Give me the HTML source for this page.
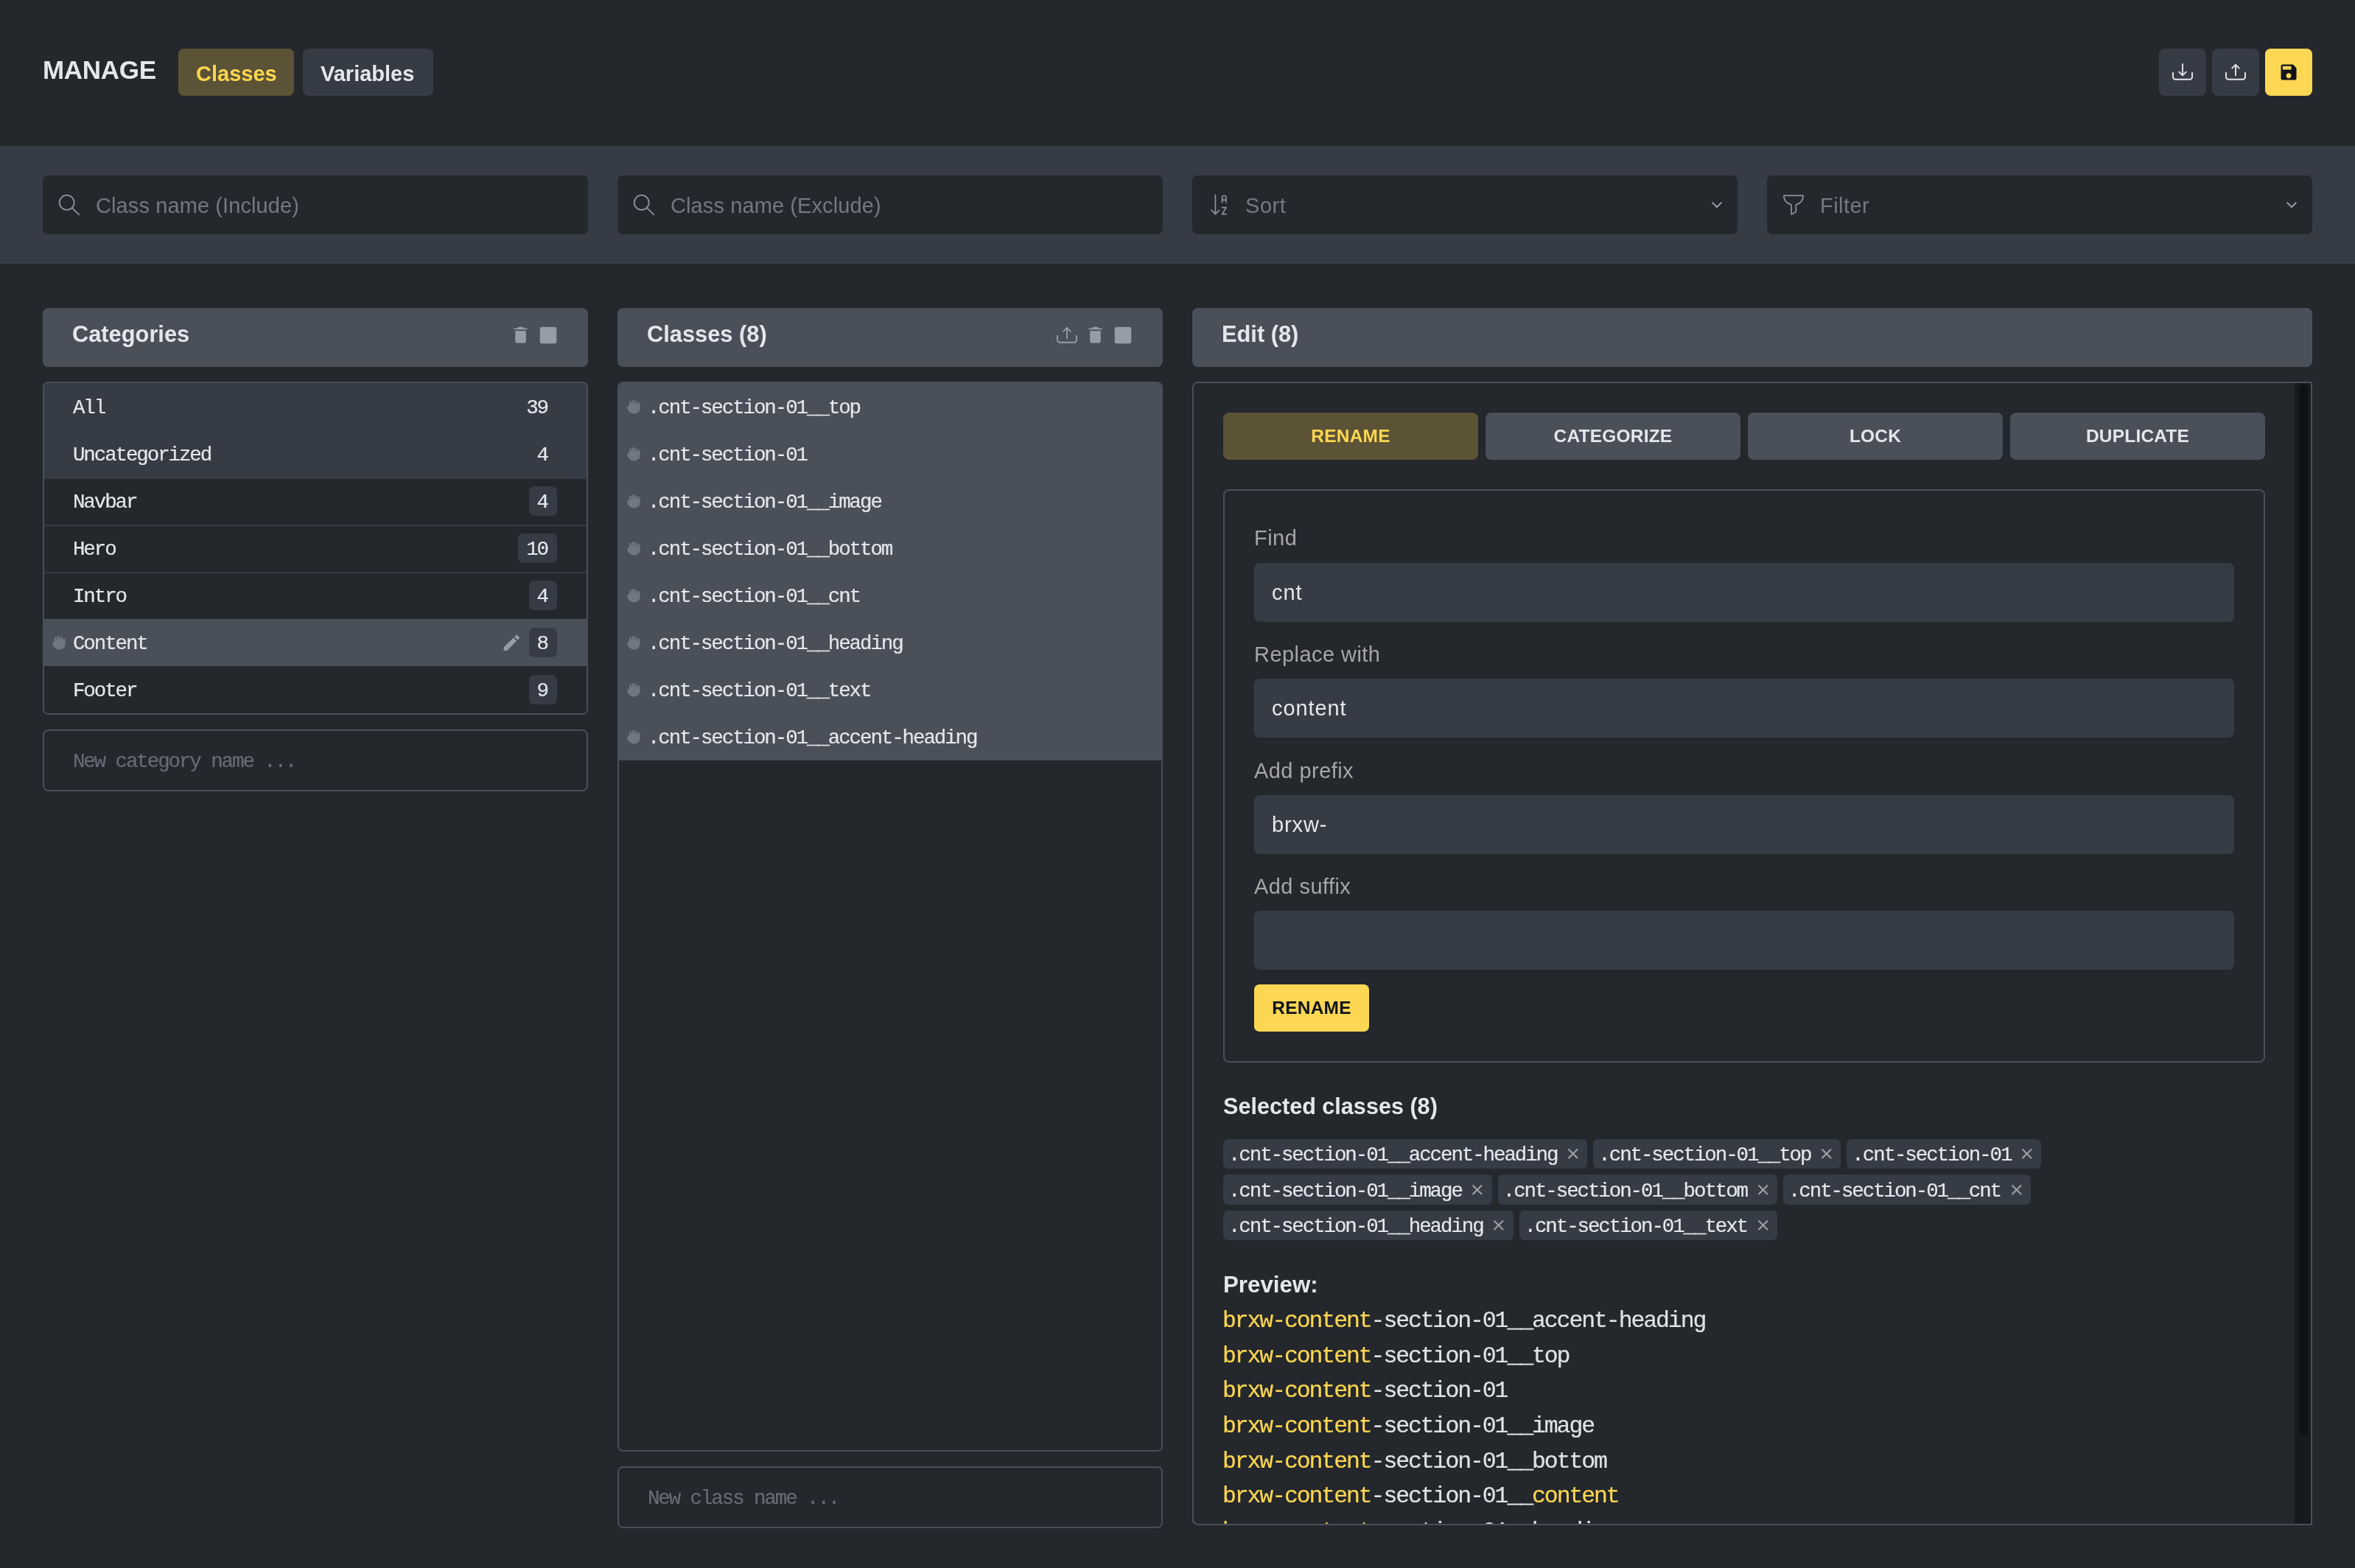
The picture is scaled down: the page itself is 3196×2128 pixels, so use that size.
<!DOCTYPE html>
<html lang="en"><head><meta charset="utf-8"><title>Manage Classes</title>
<style>
*{box-sizing:border-box;margin:0;padding:0}
html,body{width:3196px;height:2128px;overflow:hidden;background:#24272c}
body{position:relative;font-family:"Liberation Sans",sans-serif;color:#e4e7eb;-webkit-font-smoothing:antialiased;will-change:transform}
.abs{position:absolute}
.box{position:absolute;border-radius:7.5px}
.t{position:absolute;white-space:nowrap;line-height:1}
.mono{font-family:"Liberation Mono",monospace;font-size:26px;letter-spacing:-1.2px}
.b{font-weight:700}
.row{position:absolute;left:0;width:736px;height:64px}
.sep{box-shadow:inset 0 2px 0 0 #363c45}
.badge{position:absolute;top:12px;height:40px;border-radius:7px;background:#363c45}

.chip{position:absolute;height:40px;border-radius:6.5px;background:#363c45}
svg{display:block;overflow:visible}
</style></head><body>
<div class="t b" style="left:58px;top:77.07px;font-size:35px;letter-spacing:-.3px">MANAGE</div>
<div class="box" style="left:242px;top:66px;width:157px;height:64px;background:#5c5336"></div>
<div class="t b" style="left:266px;top:85.65px;font-size:29px;color:#fbd651">Classes</div>
<div class="box" style="left:411px;top:66px;width:177px;height:64px;background:#363c45"></div>
<div class="t b" style="left:435px;top:85.65px;font-size:29px;">Variables</div>
<div class="box" style="left:2930px;top:66px;width:64px;height:64px;background:#363c45"></div>
<div class="box" style="left:3002px;top:66px;width:64px;height:64px;background:#363c45"></div>
<div class="box" style="left:3074px;top:66px;width:64px;height:64px;background:#fbd754"></div>
<svg class="abs" style="left:2948px;top:85.8px" width="28" height="24" viewBox="0 0 28 24" fill="none" stroke="#e4e7eb" stroke-width="1.9" stroke-linecap="round" stroke-linejoin="round"><path d="M1 12.8v5.6a3.4 3.4 0 0 0 3.4 3.4h19.200a3.4 3.4 0 0 0 3.4-3.4v-5.6"/><path d="M14 1V15.8M9.200 11.6L14 16.4l4.8-4.8"/></svg>
<svg class="abs" style="left:3020px;top:85.8px" width="28" height="24" viewBox="0 0 28 24" fill="none" stroke="#e4e7eb" stroke-width="1.9" stroke-linecap="round" stroke-linejoin="round"><path d="M1 12.8v5.6a3.4 3.4 0 0 0 3.4 3.4h19.200a3.4 3.4 0 0 0 3.4-3.4v-5.6"/><path d="M14 1.8V16.2M9.200 6.6L14 1.8l4.8 4.8"/></svg>
<svg class="abs" style="left:3092.00px;top:84.00px" width="28" height="28" viewBox="0 0 512 512"><path fill="#111418"  d="M362.7 64h-256C83 64 64 83.2 64 106.700v298.700c0 23.500 19 42.700 42.700 42.700h298.700c23.500 0 42.700-19.200 42.700-42.700v-256L362.700 64zM256 405.300c-35.400 0-64-28.600-64-64s28.600-64 64-64 64 28.600 64 64-28.600 64-64 64zM320 192H106.700v-85.300H320V192z"/></svg>
<div class="abs" style="left:0;top:198px;width:3196px;height:160px;background:#363c45"></div>
<div class="box" style="left:58px;top:238px;width:740px;height:80px;background:#24272c"></div>
<div class="box" style="left:838px;top:238px;width:740px;height:80px;background:#24272c"></div>
<div class="box" style="left:1618px;top:238px;width:740px;height:80px;background:#24272c"></div>
<div class="box" style="left:2398px;top:238px;width:740px;height:80px;background:#24272c"></div>
<svg class="abs" style="left:79px;top:263px" width="30" height="30" viewBox="0 0 30 30" fill="none" stroke="#8e939b" stroke-width="1.8" stroke-linecap="round"><circle cx="11.700" cy="11.900" r="10"/><path d="M18.900 19.100L28.200 28.300"/></svg>
<svg class="abs" style="left:859px;top:263px" width="30" height="30" viewBox="0 0 30 30" fill="none" stroke="#8e939b" stroke-width="1.8" stroke-linecap="round"><circle cx="11.700" cy="11.900" r="10"/><path d="M18.900 19.100L28.200 28.300"/></svg>
<div class="t " style="left:130px;top:264.55px;font-size:29px;letter-spacing:.1px;color:#747980">Class name (Include)</div>
<div class="t " style="left:910px;top:264.55px;font-size:29px;letter-spacing:.1px;color:#747980">Class name (Exclude)</div>
<svg class="abs" style="left:1640px;top:260px" width="30" height="36" viewBox="0 0 30 36" fill="none" stroke="#8e939b" stroke-width="1.7" stroke-linecap="round" stroke-linejoin="round"><path d="M9.400 4.600V30.600M4.200 25.400L9.400 30.700l5.200-5.300"/><path d="M18.600 14.600V8.200a2.700 2.700 0 0 1 5.400 0V14.600M18.600 11.400H24"/><path d="M18.600 21.700H24L18.600 30.600H24"/></svg>
<div class="t " style="left:1690px;top:264.55px;font-size:29px;letter-spacing:.55px;color:#747980">Sort</div>
<svg class="abs" style="left:2418px;top:262px" width="32" height="32" viewBox="0 0 32 32" fill="none" stroke="#8e939b" stroke-width="1.7" stroke-linecap="round" stroke-linejoin="round"><path d="M3.600 3.300H28.400a.8 .8 0 0 1 .8 .9C28.600 10.500 24.500 14.600 19.300 15.800V25.600L13.100 29.100V15.800C7.600 14.600 3.400 10.500 2.800 4.200a.8 .8 0 0 1 .8-.9z"/></svg>
<div class="t " style="left:2470px;top:264.55px;font-size:29px;letter-spacing:.45px;color:#747980">Filter</div>
<svg class="abs" style="left:2322px;top:270px" width="16" height="16" viewBox="0 0 16 16" fill="none" stroke="#9a9fa7" stroke-width="2" stroke-linecap="butt" stroke-linejoin="miter"><path d="M1.600 4.600L8 11l6.400-6.400"/></svg>
<svg class="abs" style="left:3102px;top:270px" width="16" height="16" viewBox="0 0 16 16" fill="none" stroke="#9a9fa7" stroke-width="2" stroke-linecap="butt" stroke-linejoin="miter"><path d="M1.600 4.600L8 11l6.400-6.400"/></svg>
<div class="box" style="left:58px;top:418px;width:740px;height:80px;background:#49505a"></div>
<div class="t b" style="left:98px;top:439.12px;font-size:30.8px;">Categories</div>
<div class="box" style="left:838px;top:418px;width:740px;height:80px;background:#49505a"></div>
<div class="t b" style="left:878px;top:439.12px;font-size:30.8px;">Classes (8)</div>
<div class="box" style="left:1618px;top:418px;width:1520px;height:80px;background:#49505a"></div>
<div class="t b" style="left:1658px;top:439.12px;font-size:30.8px;">Edit (8)</div>
<svg class="abs" style="left:729.10px;top:440.00px" width="30" height="30" viewBox="0 0 512 512"><path fill="#969da8"  d="M405.333 64H106.667C83.198 64 64 83.198 64 106.667v298.666C64 428.802 83.198 448 106.667 448h298.666C428.802 448 448 428.802 448 405.333V106.667C448 83.198 428.802 64 405.333 64z"/></svg>
<svg class="abs" style="left:691.60px;top:440.40px" width="29" height="29" viewBox="0 0 512 512"><path fill="#969da8"  d="M128 405.429C128 428.846 147.198 448 170.667 448h170.667C364.802 448 384 428.846 384 405.429V160H128v245.429zM416 96h-80l-26.785-32H202.786L176 96H96v32h320V96z"/></svg>
<svg class="abs" style="left:1509.10px;top:440.00px" width="30" height="30" viewBox="0 0 512 512"><path fill="#969da8"  d="M405.333 64H106.667C83.198 64 64 83.198 64 106.667v298.666C64 428.802 83.198 448 106.667 448h298.666C428.802 448 448 428.802 448 405.333V106.667C448 83.198 428.802 64 405.333 64z"/></svg>
<svg class="abs" style="left:1471.60px;top:440.40px" width="29" height="29" viewBox="0 0 512 512"><path fill="#969da8"  d="M128 405.429C128 428.846 147.198 448 170.667 448h170.667C364.802 448 384 428.846 384 405.429V160H128v245.429zM416 96h-80l-26.785-32H202.786L176 96H96v32h320V96z"/></svg>
<svg class="abs" style="left:1434px;top:442.6px" width="28" height="24" viewBox="0 0 28 24" fill="none" stroke="#969da8" stroke-width="1.9" stroke-linecap="round" stroke-linejoin="round"><path d="M1 12.8v5.6a3.4 3.4 0 0 0 3.4 3.4h19.200a3.4 3.4 0 0 0 3.4-3.4v-5.6"/><path d="M14 1.8V16.2M9.200 6.6L14 1.8l4.8 4.8"/></svg>
<div class="box" style="left:58px;top:518px;width:740px;height:452px;border:2px solid #49505b;overflow:hidden">
<div class="row" style="top:0px;background:#363c45">
<div class="t" style="left:38.95px;top:20.03px;font-family:'Liberation Mono',monospace;font-size:27.5px;letter-spacing:-2.1px;-webkit-text-stroke:.2px currentColor;">All</div>
<div class="t" style="left:654.15px;top:20.03px;font-family:'Liberation Mono',monospace;font-size:27.5px;letter-spacing:-2.1px;-webkit-text-stroke:.2px currentColor;">39</div>
</div>
<div class="row" style="top:64px;background:#363c45">
<div class="t" style="left:38.95px;top:20.03px;font-family:'Liberation Mono',monospace;font-size:27.5px;letter-spacing:-2.1px;-webkit-text-stroke:.2px currentColor;">Uncategorized</div>
<div class="t" style="left:668.55px;top:20.03px;font-family:'Liberation Mono',monospace;font-size:27.5px;letter-spacing:-2.1px;-webkit-text-stroke:.2px currentColor;">4</div>
</div>
<div class="row sep" style="top:128px;background:#24272c">
<div class="t" style="left:38.95px;top:20.03px;font-family:'Liberation Mono',monospace;font-size:27.5px;letter-spacing:-2.1px;-webkit-text-stroke:.2px currentColor;">Navbar</div>
<div class="badge" style="left:657.6px;width:38.4px"></div>
<div class="t" style="left:668.55px;top:20.03px;font-family:'Liberation Mono',monospace;font-size:27.5px;letter-spacing:-2.1px;-webkit-text-stroke:.2px currentColor;">4</div>
</div>
<div class="row sep" style="top:192px;background:#24272c">
<div class="t" style="left:38.95px;top:20.03px;font-family:'Liberation Mono',monospace;font-size:27.5px;letter-spacing:-2.1px;-webkit-text-stroke:.2px currentColor;">Hero</div>
<div class="badge" style="left:643.2px;width:52.8px"></div>
<div class="t" style="left:654.15px;top:20.03px;font-family:'Liberation Mono',monospace;font-size:27.5px;letter-spacing:-2.1px;-webkit-text-stroke:.2px currentColor;">10</div>
</div>
<div class="row sep" style="top:256px;background:#24272c">
<div class="t" style="left:38.95px;top:20.03px;font-family:'Liberation Mono',monospace;font-size:27.5px;letter-spacing:-2.1px;-webkit-text-stroke:.2px currentColor;">Intro</div>
<div class="badge" style="left:657.6px;width:38.4px"></div>
<div class="t" style="left:668.55px;top:20.03px;font-family:'Liberation Mono',monospace;font-size:27.5px;letter-spacing:-2.1px;-webkit-text-stroke:.2px currentColor;">4</div>
</div>
<div class="row" style="top:320px;background:#49505a">
<div class="t" style="left:38.95px;top:20.03px;font-family:'Liberation Mono',monospace;font-size:27.5px;letter-spacing:-2.1px;-webkit-text-stroke:.2px currentColor;">Content</div>
<div class="badge" style="left:657.6px;width:38.4px"></div>
<div class="t" style="left:668.55px;top:20.03px;font-family:'Liberation Mono',monospace;font-size:27.5px;letter-spacing:-2.1px;-webkit-text-stroke:.2px currentColor;">8</div>
</div>
<div class="row" style="top:384px;background:#24272c">
<div class="t" style="left:38.95px;top:20.03px;font-family:'Liberation Mono',monospace;font-size:27.5px;letter-spacing:-2.1px;-webkit-text-stroke:.2px currentColor;">Footer</div>
<div class="badge" style="left:657.6px;width:38.4px"></div>
<div class="t" style="left:668.55px;top:20.03px;font-family:'Liberation Mono',monospace;font-size:27.5px;letter-spacing:-2.1px;-webkit-text-stroke:.2px currentColor;">9</div>
</div>
</div>
<svg class="abs" style="left:70.80px;top:863.00px" width="18" height="19" viewBox="0 0 18 19"><path fill="#6f7781" d="M.4 11C.2 9.5 .8 8 1.6 7.4 2.2 7 2.9 7.6 3.200 8.4V3C3.200 1 6.1 1 6.1 3V5.6H7V1.6C7-.4 10.100-.4 10.100 1.600V5.6H10.900V3C10.900 1 13.900 1 13.900 3V6.200H14.800V4.800C14.800 2.800 17.600 2.800 17.600 4.800V11C17.600 15.500 14 18.500 9.500 18.500 5.500 18.500 2.800 16 1.200 13.500 .7 12.700 .5 11.800 .4 11Z"/></svg>
<svg class="abs" style="left:679.50px;top:857.70px" width="28.6" height="28.6" viewBox="0 0 512 512"><path fill="#969da8"  d="M64 368v80h80l235.727-235.729-79.999-79.998L64 368zm377.602-217.602c8.531-8.531 8.531-21.334 0-29.865l-50.135-50.135c-8.531-8.531-21.334-8.531-29.865 0l-39.468 39.469 79.999 79.998 39.469-39.467z"/></svg>
<div class="box" style="left:58px;top:990px;width:740px;height:84px;border:2px solid #49505b"></div>
<div class="t" style="left:98.95px;top:1020.23px;font-family:'Liberation Mono',monospace;font-size:27.5px;letter-spacing:-2.1px;-webkit-text-stroke:.2px currentColor;color:#666c75">New category name ...</div>
<div class="box" style="left:838px;top:518px;width:740px;height:1452px;border:2px solid #49505b;overflow:hidden">
<div class="abs" style="left:0;top:0;width:736px;height:512px;background:#49505a"></div>
<div class="t" style="left:38.95px;top:20.03px;font-family:'Liberation Mono',monospace;font-size:27.5px;letter-spacing:-2.1px;-webkit-text-stroke:.2px currentColor;">.cnt-section-01__top</div>
<div class="t" style="left:38.95px;top:84.03px;font-family:'Liberation Mono',monospace;font-size:27.5px;letter-spacing:-2.1px;-webkit-text-stroke:.2px currentColor;">.cnt-section-01</div>
<div class="t" style="left:38.95px;top:148.03px;font-family:'Liberation Mono',monospace;font-size:27.5px;letter-spacing:-2.1px;-webkit-text-stroke:.2px currentColor;">.cnt-section-01__image</div>
<div class="t" style="left:38.95px;top:212.03px;font-family:'Liberation Mono',monospace;font-size:27.5px;letter-spacing:-2.1px;-webkit-text-stroke:.2px currentColor;">.cnt-section-01__bottom</div>
<div class="t" style="left:38.95px;top:276.03px;font-family:'Liberation Mono',monospace;font-size:27.5px;letter-spacing:-2.1px;-webkit-text-stroke:.2px currentColor;">.cnt-section-01__cnt</div>
<div class="t" style="left:38.95px;top:340.03px;font-family:'Liberation Mono',monospace;font-size:27.5px;letter-spacing:-2.1px;-webkit-text-stroke:.2px currentColor;">.cnt-section-01__heading</div>
<div class="t" style="left:38.95px;top:404.03px;font-family:'Liberation Mono',monospace;font-size:27.5px;letter-spacing:-2.1px;-webkit-text-stroke:.2px currentColor;">.cnt-section-01__text</div>
<div class="t" style="left:38.95px;top:468.03px;font-family:'Liberation Mono',monospace;font-size:27.5px;letter-spacing:-2.1px;-webkit-text-stroke:.2px currentColor;">.cnt-section-01__accent-heading</div>
</div>
<svg class="abs" style="left:851.00px;top:542.60px" width="18" height="19" viewBox="0 0 18 19"><path fill="#6f7781" d="M.4 11C.2 9.5 .8 8 1.6 7.4 2.2 7 2.9 7.6 3.200 8.4V3C3.200 1 6.1 1 6.1 3V5.6H7V1.6C7-.4 10.100-.4 10.100 1.600V5.6H10.900V3C10.900 1 13.900 1 13.900 3V6.200H14.800V4.800C14.800 2.800 17.600 2.800 17.600 4.800V11C17.600 15.500 14 18.500 9.500 18.500 5.500 18.500 2.800 16 1.200 13.500 .7 12.700 .5 11.800 .4 11Z"/></svg>
<svg class="abs" style="left:851.00px;top:606.60px" width="18" height="19" viewBox="0 0 18 19"><path fill="#6f7781" d="M.4 11C.2 9.5 .8 8 1.6 7.4 2.2 7 2.9 7.6 3.200 8.4V3C3.200 1 6.1 1 6.1 3V5.6H7V1.6C7-.4 10.100-.4 10.100 1.600V5.6H10.900V3C10.900 1 13.900 1 13.900 3V6.200H14.800V4.800C14.800 2.800 17.600 2.800 17.600 4.800V11C17.600 15.500 14 18.500 9.500 18.500 5.500 18.500 2.800 16 1.200 13.500 .7 12.700 .5 11.800 .4 11Z"/></svg>
<svg class="abs" style="left:851.00px;top:670.60px" width="18" height="19" viewBox="0 0 18 19"><path fill="#6f7781" d="M.4 11C.2 9.5 .8 8 1.6 7.4 2.2 7 2.9 7.6 3.200 8.4V3C3.200 1 6.1 1 6.1 3V5.6H7V1.6C7-.4 10.100-.4 10.100 1.600V5.6H10.900V3C10.900 1 13.900 1 13.900 3V6.200H14.800V4.800C14.800 2.800 17.600 2.800 17.600 4.800V11C17.600 15.500 14 18.500 9.500 18.500 5.500 18.500 2.800 16 1.200 13.500 .7 12.700 .5 11.800 .4 11Z"/></svg>
<svg class="abs" style="left:851.00px;top:734.60px" width="18" height="19" viewBox="0 0 18 19"><path fill="#6f7781" d="M.4 11C.2 9.5 .8 8 1.6 7.4 2.2 7 2.9 7.6 3.200 8.4V3C3.200 1 6.1 1 6.1 3V5.6H7V1.6C7-.4 10.100-.4 10.100 1.600V5.6H10.900V3C10.900 1 13.900 1 13.900 3V6.200H14.800V4.800C14.800 2.800 17.600 2.800 17.600 4.800V11C17.600 15.500 14 18.500 9.500 18.500 5.500 18.500 2.800 16 1.200 13.500 .7 12.700 .5 11.800 .4 11Z"/></svg>
<svg class="abs" style="left:851.00px;top:798.60px" width="18" height="19" viewBox="0 0 18 19"><path fill="#6f7781" d="M.4 11C.2 9.5 .8 8 1.6 7.4 2.2 7 2.9 7.6 3.200 8.4V3C3.200 1 6.1 1 6.1 3V5.6H7V1.6C7-.4 10.100-.4 10.100 1.600V5.6H10.900V3C10.900 1 13.900 1 13.900 3V6.200H14.800V4.800C14.800 2.800 17.600 2.800 17.600 4.800V11C17.600 15.500 14 18.500 9.500 18.500 5.500 18.500 2.800 16 1.200 13.500 .7 12.700 .5 11.800 .4 11Z"/></svg>
<svg class="abs" style="left:851.00px;top:862.60px" width="18" height="19" viewBox="0 0 18 19"><path fill="#6f7781" d="M.4 11C.2 9.5 .8 8 1.6 7.4 2.2 7 2.9 7.6 3.200 8.4V3C3.200 1 6.1 1 6.1 3V5.6H7V1.6C7-.4 10.100-.4 10.100 1.600V5.6H10.900V3C10.900 1 13.900 1 13.900 3V6.200H14.800V4.800C14.800 2.800 17.600 2.800 17.600 4.800V11C17.600 15.500 14 18.500 9.500 18.500 5.500 18.500 2.800 16 1.200 13.500 .7 12.700 .5 11.800 .4 11Z"/></svg>
<svg class="abs" style="left:851.00px;top:926.60px" width="18" height="19" viewBox="0 0 18 19"><path fill="#6f7781" d="M.4 11C.2 9.5 .8 8 1.6 7.4 2.2 7 2.9 7.6 3.200 8.4V3C3.200 1 6.1 1 6.1 3V5.6H7V1.6C7-.4 10.100-.4 10.100 1.600V5.6H10.900V3C10.900 1 13.900 1 13.900 3V6.200H14.800V4.800C14.800 2.800 17.600 2.800 17.600 4.800V11C17.600 15.500 14 18.500 9.500 18.500 5.500 18.500 2.800 16 1.200 13.500 .7 12.700 .5 11.800 .4 11Z"/></svg>
<svg class="abs" style="left:851.00px;top:990.60px" width="18" height="19" viewBox="0 0 18 19"><path fill="#6f7781" d="M.4 11C.2 9.5 .8 8 1.6 7.4 2.2 7 2.9 7.6 3.200 8.4V3C3.200 1 6.1 1 6.1 3V5.6H7V1.6C7-.4 10.100-.4 10.100 1.600V5.6H10.900V3C10.900 1 13.900 1 13.900 3V6.200H14.800V4.800C14.800 2.800 17.600 2.800 17.600 4.800V11C17.600 15.500 14 18.500 9.500 18.500 5.500 18.500 2.800 16 1.200 13.500 .7 12.700 .5 11.800 .4 11Z"/></svg>
<div class="box" style="left:838px;top:1990px;width:740px;height:84px;border:2px solid #49505b"></div>
<div class="t" style="left:878.95px;top:2020.23px;font-family:'Liberation Mono',monospace;font-size:27.5px;letter-spacing:-2.1px;-webkit-text-stroke:.2px currentColor;color:#666c75">New class name ...</div>
<div class="abs" style="left:1618px;top:518px;width:1520px;height:1552px;border:2px solid #49505b;border-radius:8px 2px 2px 8px"></div>
<div class="abs" style="left:3114px;top:520px;width:22px;height:1548px;background:#161a1d"></div>
<div class="abs" style="left:3120px;top:522px;width:12px;height:1425px;border-radius:6px;background:#0d1113"></div>
<div class="box" style="left:1660px;top:560px;width:346px;height:64px;background:#5c5336;border-radius:8px"></div>
<div class="t b" style="left:1660px;top:580.16px;font-size:24.5px;width:346px;text-align:center;letter-spacing:.2px;color:#fbd651">RENAME</div>
<div class="box" style="left:2016px;top:560px;width:346px;height:64px;background:#49505a;border-radius:8px"></div>
<div class="t b" style="left:2016px;top:580.16px;font-size:24.5px;width:346px;text-align:center;letter-spacing:.2px;color:#e4e7eb">CATEGORIZE</div>
<div class="box" style="left:2372px;top:560px;width:346px;height:64px;background:#49505a;border-radius:8px"></div>
<div class="t b" style="left:2372px;top:580.16px;font-size:24.5px;width:346px;text-align:center;letter-spacing:.2px;color:#e4e7eb">LOCK</div>
<div class="box" style="left:2728px;top:560px;width:346px;height:64px;background:#49505a;border-radius:8px"></div>
<div class="t b" style="left:2728px;top:580.16px;font-size:24.5px;width:346px;text-align:center;letter-spacing:.2px;color:#e4e7eb">DUPLICATE</div>
<div class="box" style="left:1660px;top:664px;width:1414px;height:778px;border:2px solid #49505b"></div>
<div class="t " style="left:1702px;top:715.95px;font-size:29px;letter-spacing:.45px;color:#a6a6a6">Find</div>
<div class="box" style="left:1702px;top:764px;width:1330px;height:80px;background:#363c45"></div>
<div class="t " style="left:1726px;top:789.65px;font-size:29px;letter-spacing:.9px">cnt</div>
<div class="t " style="left:1702px;top:873.65px;font-size:29px;letter-spacing:.45px;color:#a6a6a6">Replace with</div>
<div class="box" style="left:1702px;top:921px;width:1330px;height:80px;background:#363c45"></div>
<div class="t " style="left:1726px;top:946.65px;font-size:29px;letter-spacing:.9px">content</div>
<div class="t " style="left:1702px;top:1031.75px;font-size:29px;letter-spacing:.45px;color:#a6a6a6">Add prefix</div>
<div class="box" style="left:1702px;top:1079px;width:1330px;height:80px;background:#363c45"></div>
<div class="t " style="left:1726px;top:1104.65px;font-size:29px;letter-spacing:.9px">brxw-</div>
<div class="t " style="left:1702px;top:1188.85px;font-size:29px;letter-spacing:.45px;color:#a6a6a6">Add suffix</div>
<div class="box" style="left:1702px;top:1236px;width:1330px;height:80px;background:#363c45"></div>
<div class="box" style="left:1702px;top:1336px;width:156px;height:64px;background:#fbd754;border-radius:7px"></div>
<div class="t b" style="left:1702px;top:1356.46px;font-size:24.5px;width:156px;text-align:center;letter-spacing:.2px;color:#111418">RENAME</div>
<div class="t b" style="left:1660px;top:1486.19px;font-size:30.6px;">Selected classes (8)</div>
<div class="chip" style="left:1660.0px;top:1545.8px;width:494.4px;height:40.500px"></div>
<div class="t" style="left:1666.95px;top:1554.23px;font-family:'Liberation Mono',monospace;font-size:27.5px;letter-spacing:-2.1px;-webkit-text-stroke:.2px currentColor;">.cnt-section-01__accent-heading</div>
<svg class="abs" style="left:2122.95px;top:1554.45px" width="23.5" height="23.5" viewBox="0 0 512 512"><path fill="#9ea3aa" stroke="#9ea3aa" stroke-width="7" d="M405 136.798L375.202 107 256 226.202 136.798 107 107 136.798 226.202 256 107 375.202 136.798 405 256 285.798 375.202 405 405 375.202 285.798 256z"/></svg>
<div class="chip" style="left:2162.4px;top:1545.8px;width:336.0px;height:40.500px"></div>
<div class="t" style="left:2169.35px;top:1554.23px;font-family:'Liberation Mono',monospace;font-size:27.5px;letter-spacing:-2.1px;-webkit-text-stroke:.2px currentColor;">.cnt-section-01__top</div>
<svg class="abs" style="left:2466.95px;top:1554.45px" width="23.5" height="23.5" viewBox="0 0 512 512"><path fill="#9ea3aa" stroke="#9ea3aa" stroke-width="7" d="M405 136.798L375.202 107 256 226.202 136.798 107 107 136.798 226.202 256 107 375.202 136.798 405 256 285.798 375.202 405 405 375.202 285.798 256z"/></svg>
<div class="chip" style="left:2506.4px;top:1545.8px;width:264.0px;height:40.500px"></div>
<div class="t" style="left:2513.35px;top:1554.23px;font-family:'Liberation Mono',monospace;font-size:27.5px;letter-spacing:-2.1px;-webkit-text-stroke:.2px currentColor;">.cnt-section-01</div>
<svg class="abs" style="left:2738.95px;top:1554.45px" width="23.5" height="23.5" viewBox="0 0 512 512"><path fill="#9ea3aa" stroke="#9ea3aa" stroke-width="7" d="M405 136.798L375.202 107 256 226.202 136.798 107 107 136.798 226.202 256 107 375.202 136.798 405 256 285.798 375.202 405 405 375.202 285.798 256z"/></svg>
<div class="chip" style="left:1660.0px;top:1594.3px;width:364.8px;height:40.500px"></div>
<div class="t" style="left:1666.95px;top:1602.73px;font-family:'Liberation Mono',monospace;font-size:27.5px;letter-spacing:-2.1px;-webkit-text-stroke:.2px currentColor;">.cnt-section-01__image</div>
<svg class="abs" style="left:1993.35px;top:1602.95px" width="23.5" height="23.5" viewBox="0 0 512 512"><path fill="#9ea3aa" stroke="#9ea3aa" stroke-width="7" d="M405 136.798L375.202 107 256 226.202 136.798 107 107 136.798 226.202 256 107 375.202 136.798 405 256 285.798 375.202 405 405 375.202 285.798 256z"/></svg>
<div class="chip" style="left:2032.8px;top:1594.3px;width:379.2px;height:40.500px"></div>
<div class="t" style="left:2039.75px;top:1602.73px;font-family:'Liberation Mono',monospace;font-size:27.5px;letter-spacing:-2.1px;-webkit-text-stroke:.2px currentColor;">.cnt-section-01__bottom</div>
<svg class="abs" style="left:2380.55px;top:1602.95px" width="23.5" height="23.5" viewBox="0 0 512 512"><path fill="#9ea3aa" stroke="#9ea3aa" stroke-width="7" d="M405 136.798L375.202 107 256 226.202 136.798 107 107 136.798 226.202 256 107 375.202 136.798 405 256 285.798 375.202 405 405 375.202 285.798 256z"/></svg>
<div class="chip" style="left:2420.0px;top:1594.3px;width:336.0px;height:40.500px"></div>
<div class="t" style="left:2426.95px;top:1602.73px;font-family:'Liberation Mono',monospace;font-size:27.5px;letter-spacing:-2.1px;-webkit-text-stroke:.2px currentColor;">.cnt-section-01__cnt</div>
<svg class="abs" style="left:2724.55px;top:1602.95px" width="23.5" height="23.5" viewBox="0 0 512 512"><path fill="#9ea3aa" stroke="#9ea3aa" stroke-width="7" d="M405 136.798L375.202 107 256 226.202 136.798 107 107 136.798 226.202 256 107 375.202 136.798 405 256 285.798 375.202 405 405 375.202 285.798 256z"/></svg>
<div class="chip" style="left:1660.0px;top:1642.8px;width:393.6px;height:40.500px"></div>
<div class="t" style="left:1666.95px;top:1651.23px;font-family:'Liberation Mono',monospace;font-size:27.5px;letter-spacing:-2.1px;-webkit-text-stroke:.2px currentColor;">.cnt-section-01__heading</div>
<svg class="abs" style="left:2022.15px;top:1651.45px" width="23.5" height="23.5" viewBox="0 0 512 512"><path fill="#9ea3aa" stroke="#9ea3aa" stroke-width="7" d="M405 136.798L375.202 107 256 226.202 136.798 107 107 136.798 226.202 256 107 375.202 136.798 405 256 285.798 375.202 405 405 375.202 285.798 256z"/></svg>
<div class="chip" style="left:2061.6px;top:1642.8px;width:350.4px;height:40.500px"></div>
<div class="t" style="left:2068.55px;top:1651.23px;font-family:'Liberation Mono',monospace;font-size:27.5px;letter-spacing:-2.1px;-webkit-text-stroke:.2px currentColor;">.cnt-section-01__text</div>
<svg class="abs" style="left:2380.55px;top:1651.45px" width="23.5" height="23.5" viewBox="0 0 512 512"><path fill="#9ea3aa" stroke="#9ea3aa" stroke-width="7" d="M405 136.798L375.202 107 256 226.202 136.798 107 107 136.798 226.202 256 107 375.202 136.798 405 256 285.798 375.202 405 405 375.202 285.798 256z"/></svg>
<div class="t b" style="left:1660px;top:1727.50px;font-size:31.3px;">Preview:</div>
<div class="t" style="left:1658.95px;top:1777.17px;font-family:'Liberation Mono',monospace;font-size:31.5px;letter-spacing:-2.1px;-webkit-text-stroke:.2px currentColor;color:#dfe2e6"><span style="color:#fbd651">brxw-content</span>-section-01__accent-heading<span style="color:#fbd651"></span></div>
<div class="t" style="left:1658.95px;top:1824.77px;font-family:'Liberation Mono',monospace;font-size:31.5px;letter-spacing:-2.1px;-webkit-text-stroke:.2px currentColor;color:#dfe2e6"><span style="color:#fbd651">brxw-content</span>-section-01__top<span style="color:#fbd651"></span></div>
<div class="t" style="left:1658.95px;top:1872.37px;font-family:'Liberation Mono',monospace;font-size:31.5px;letter-spacing:-2.1px;-webkit-text-stroke:.2px currentColor;color:#dfe2e6"><span style="color:#fbd651">brxw-content</span>-section-01<span style="color:#fbd651"></span></div>
<div class="t" style="left:1658.95px;top:1919.97px;font-family:'Liberation Mono',monospace;font-size:31.5px;letter-spacing:-2.1px;-webkit-text-stroke:.2px currentColor;color:#dfe2e6"><span style="color:#fbd651">brxw-content</span>-section-01__image<span style="color:#fbd651"></span></div>
<div class="t" style="left:1658.95px;top:1967.57px;font-family:'Liberation Mono',monospace;font-size:31.5px;letter-spacing:-2.1px;-webkit-text-stroke:.2px currentColor;color:#dfe2e6"><span style="color:#fbd651">brxw-content</span>-section-01__bottom<span style="color:#fbd651"></span></div>
<div class="t" style="left:1658.95px;top:2015.17px;font-family:'Liberation Mono',monospace;font-size:31.5px;letter-spacing:-2.1px;-webkit-text-stroke:.2px currentColor;color:#dfe2e6"><span style="color:#fbd651">brxw-content</span>-section-01__<span style="color:#fbd651">content</span></div>
<div class="t" style="left:1658.95px;top:2062.77px;font-family:'Liberation Mono',monospace;font-size:31.5px;letter-spacing:-2.1px;-webkit-text-stroke:.2px currentColor;color:#dfe2e6"><span style="color:#fbd651">brxw-content</span>-section-01__heading<span style="color:#fbd651"></span></div>
<div class="abs" style="left:1600px;top:2068px;width:1596px;height:60px;background:#24272c"></div>
<div class="abs" style="left:1618px;top:2060px;width:1520px;height:10px;border:2px solid #49505b;border-top:none;border-radius:0 0 2px 8px"></div>
<script>(function(){try{var d=window.devicePixelRatio||1,w=window.innerWidth;if(d>1&&Math.abs(w*d-3196)<4){document.documentElement.style.zoom=String(1/d);}}catch(e){}})();</script>
</body></html>
